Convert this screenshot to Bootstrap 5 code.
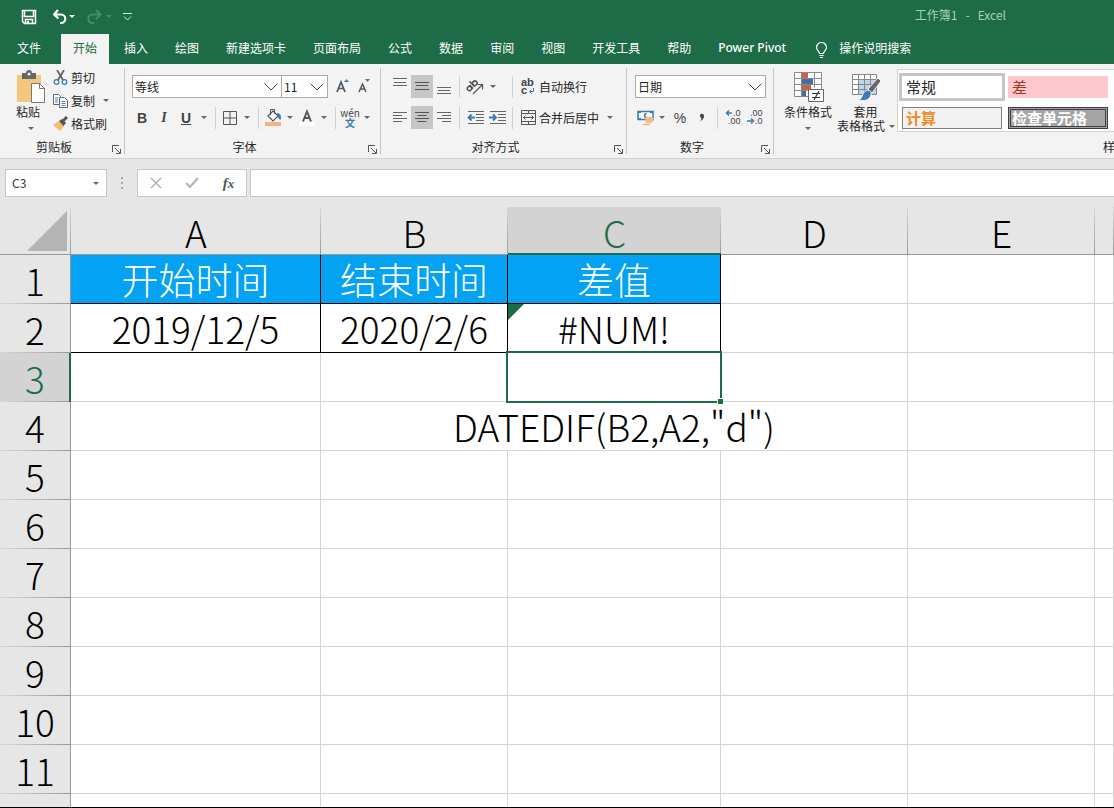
<!DOCTYPE html>
<html lang="zh-CN">
<head>
<meta charset="utf-8">
<meta name="viewport" content="width=device-width, initial-scale=1">
<title>工作簿1 - Excel</title>
<link href="https://cdn.jsdelivr.net/npm/bootstrap@5.3.0/dist/css/bootstrap.min.css" rel="stylesheet">
<style>
:root { --xl-green: #1e6b47; --xl-ribbon: #f3f3f3; --xl-chrome: #e6e6e6; --xl-line: #d4d4d4; }
body { font-family: "Noto Sans CJK SC", "Noto Sans", sans-serif; font-size: 12px; line-height: 18px; color: #262626; background: #fff; }
button { font: inherit; color: inherit; background: none; border: 0; padding: 0; }
svg { display: block; flex: none; }

/* title bar and tabs */
.titlebar { height: 34px; background: var(--xl-green); color: #fff; padding-left: 21px; }
.qgap { margin-left: 11px; }
.doc-title { color: #a5cfb9; padding-right: 108px; padding-bottom: 4px; white-space: pre; }
.ribbon-tabs { height: 30px; background: var(--xl-green); gap: 3px; padding-left: 5px; }
.ribbon-tabs .nav-link { color: #fff; padding: 4px 12px 0; height: 30px; line-height: 20px; white-space: nowrap; border-radius: 0; }
.ribbon-tabs .nav-link.active { background: var(--xl-ribbon); color: var(--xl-green); }
.ribbon-tabs .tab-file { margin-right: 5px; }
.ribbon-tabs .tab-addin { font-family: "Noto Sans", sans-serif; font-weight: 500; }

/* ribbon */
.ribbon { background: var(--xl-ribbon); height: 95px; border-bottom: 1px solid #cfcfcf; }
.rgroup { position: relative; display: flex; flex-direction: column; flex: none; padding-top: 11px; }
.rgroup::after { content: ""; position: absolute; right: 0; top: 4px; bottom: 4px; border-right: 1px solid #c6c6c6; }
.g-clip { width: 125px; padding-top: 2px; }
.g-font { width: 256px; }
.g-align { width: 246px; }
.g-num { width: 147px; }
.g-style { width: 682px; padding-top: 5px; }
.trow { display: flex; align-items: center; height: 23px; margin-bottom: 8px; }
.g-font .trow { padding-left: 6px; }
.g-font .trow:first-child { padding-left: 7px; }
.g-align .trow, .g-num .trow { padding-left: 8px; }
.tool { width: 22px; height: 23px; display: flex; align-items: center; justify-content: center; flex: none; }
.tool-sm { width: 20px; }
.tool.on { background: #c6c6c6; }
.vsep { width: 1px; height: 22px; background: #d2d2d2; margin: 0 4px; flex: none; }
.vsep-far { margin-left: 12px; }
.drop { width: 14px; height: 23px; display: flex; align-items: center; justify-content: center; flex: none; }
.drop::before, .caret::before { content: ""; border: 3px solid transparent; border-top-color: #666; border-bottom: 0; }
.caret { display: flex; justify-content: center; }
.glyph { font-family: "Liberation Sans", sans-serif; font-weight: 700; font-size: 14px; color: #444; }
.glyph-i { font-family: "Liberation Serif", serif; font-style: italic; }
.pinyin { font-size: 10px; line-height: 10px; color: #444; flex-direction: column; }
.pinyin b { color: #3c7ab5; }
.cmd { display: flex; align-items: center; height: 23px; white-space: nowrap; }
.cmd svg { margin-right: 3px; }
.glabel { display: flex; margin-top: auto; height: 20px; padding-bottom: 2px; text-align: center; }
.glabel button { width: 17px; display: flex; align-items: center; justify-content: center; padding-top: 5px; }
.big { text-align: center; line-height: 14px; white-space: nowrap; flex: none; }
.cf { width: 52px; margin-left: 8px; }
.tf { width: 57px; margin-left: 3px; }
.xl-select { height: 23px; padding: 0 18px 0 2px; font-size: 12px; line-height: 20px; color: #262626; border: 1px solid #ababab; border-radius: 0; background-color: #fff; flex: none;
  background-image: url("data:image/svg+xml,%3csvg xmlns='http://www.w3.org/2000/svg' viewBox='0 0 14 8'%3e%3cpath fill='none' stroke='%23444' d='M.5.5 7 7 13.5.5'/%3e%3c/svg%3e"); background-size: 14px 8px; background-position: right 3px center; }
.w-family { width: 150px; }
.w-size { width: 47px; margin-left: -1px; padding-right: 16px; }
.w-num { width: 131px; }

/* cell style gallery */
.gallery { display: grid; grid-template-columns: repeat(6, 100px); gap: 6px; background: #fff; border: 1px solid #d2d2d2; height: 63px; padding: 6px 0 0 4px; margin-left: 3px; overflow: hidden; flex: none; }
.swatch { height: 22px; font-size: 15px; line-height: 20px; text-align: left; padding-left: 4px; }
.sw-normal { outline: 3px solid #c6c6c6; }
.sw-bad { background: #ffc7ce; color: #9c3a20; }
.sw-calc { background: #f2f2f2; border: 1px solid #7f7f7f; color: #ee8c24; font-weight: 700; padding-left: 3px; }
.sw-check { background: #a5a5a5; color: #fff; border: 3px double #3f3f3f; font-weight: 700; line-height: 16px; padding-left: 1px; }

/* formula bar */
.fbar { background: var(--xl-chrome); padding: 10px 0; height: 48px; }
.fbox { height: 28px; background: #fff; border: 1px solid #c6c6c6; flex: none; }
.fbox input { border: 0; outline: 0; background: none; width: 100%; padding: 0 0 0 6px; color: #333; }
.namebox { width: 102px; margin-left: 5px; }
.namebox button { width: 20px; flex: none; }
.fbuttons { width: 110px; }
.fmain { margin-left: 3px; }
.fdots { width: 30px; }
.fx { font-family: "Liberation Serif", serif; font-style: italic; font-weight: 700; font-size: 15px; color: #555; }

/* sheet */
.sheet { flex: 1 1 0; min-height: 0; overflow: hidden; border-bottom: 1px solid #000; }
.cells { width: 100%; table-layout: fixed; border-collapse: separate; border-spacing: 0; font-size: 37px; line-height: 48px; font-weight: 300; color: #000; text-align: center; }
.cells th, .cells td { padding: 0; height: 49px; border: 0 solid var(--xl-line); border-width: 0 1px 1px 0; font-weight: 300; white-space: nowrap; position: relative; }
.cells thead th { height: 48px; line-height: 44px; padding-top: 3px; background: linear-gradient(#d8d8d8, #999) right / 1px 100% no-repeat var(--xl-chrome); border-right: 0; border-bottom-color: #999; }
.cells tbody th { background: linear-gradient(90deg, #d8d8d8, #999) bottom / 100% 1px no-repeat var(--xl-chrome); border-bottom: 0; border-right-color: #999; }
.cells thead th.sel { background-color: #d2d3d2; color: var(--xl-green); border-bottom-color: var(--xl-green); box-shadow: inset 0 -1px var(--xl-green); }
.cells tbody th.sel { background-color: #d2d3d2; color: var(--xl-green); border-right-color: var(--xl-green); box-shadow: inset -1px 0 var(--xl-green); }
.cells td.boxed { border-color: #000; }
.cells td.head { background: #04a2f3; color: #fff; }
.corner svg { position: absolute; right: 4px; bottom: 3px; }
.err::before { content: ""; position: absolute; left: 0; top: 0; border: 8px solid; border-color: var(--xl-green) transparent transparent var(--xl-green); }
.cursor { position: absolute; inset: -2px; border: 2px solid var(--xl-green); z-index: 2; }
.cursor::after { content: ""; position: absolute; right: -3px; bottom: -3px; width: 6px; height: 6px; background: var(--xl-green); border: solid #fff; border-width: 1px 0 0 1px; }
.c-row { width: 71px; } .c-a { width: 250px; } .c-b { width: 187px; } .c-c { width: 213px; }
</style>
</head>
<body>
<div class="d-flex flex-column vh-100 overflow-hidden">

<header class="titlebar d-flex align-items-center flex-shrink-0">
  <button aria-label="保存"><svg width="16" height="16" viewBox="0 0 16 16"><path d="M1.500 1.500h13v13H3.500L1.500 12.500zM3.500 2v5.500h9V2M4.500 14.500v-4h7v4" fill="none" stroke="#fff" stroke-width="1.500"/><path d="M6 12h2v2.500H6z" fill="#fff"/></svg></button>
  <button class="ms-3 ps-0" aria-label="撤消"><svg width="16" height="16" viewBox="0 0 16 16"><path d="M5 1 1 5.500l4.500 4M1.500 5.500H8a4 4 0 0 1 0 8.500H7" fill="none" stroke="#fff" stroke-width="2.200"/></svg></button>
  <svg width="6" height="4"><path d="M0 0h6L3 3z" fill="#fff"/></svg>
  <button class="qgap" aria-label="恢复"><svg width="16" height="16" viewBox="0 0 16 16"><path d="m10 1 4.500 4.500L10 10M14 5.500H6.500a4 4 0 0 0 0 8.500H8" fill="none" stroke="#4a8a69" stroke-width="2"/></svg></button>
  <svg class="ms-1" width="6" height="4"><path d="M0 0h6L3 3z" fill="#4a8a69"/></svg>
  <button class="qgap" aria-label="自定义快速访问工具栏"><svg width="9" height="8"><path d="M0 .5h9M1 3.500l3.500 3.500L8 3.500" fill="none" stroke="#d5eadf"/></svg></button>
  <div class="doc-title ms-auto">工作簿1   -   Excel</div>
</header>

<nav class="ribbon-tabs nav flex-nowrap flex-shrink-0 overflow-hidden">
  <a class="nav-link tab-file" href="#">文件</a>
  <a class="nav-link active" href="#" aria-current="page">开始</a>
  <a class="nav-link" href="#">插入</a>
  <a class="nav-link" href="#">绘图</a>
  <a class="nav-link" href="#">新建选项卡</a>
  <a class="nav-link" href="#">页面布局</a>
  <a class="nav-link" href="#">公式</a>
  <a class="nav-link" href="#">数据</a>
  <a class="nav-link" href="#">审阅</a>
  <a class="nav-link" href="#">视图</a>
  <a class="nav-link" href="#">开发工具</a>
  <a class="nav-link" href="#">帮助</a>
  <a class="nav-link tab-addin" href="#">Power Pivot</a>
  <a class="nav-link d-flex" href="#"><svg class="me-2 mt-1" width="18" height="18" viewBox="0 0 18 18"><path d="M6.500 11.500c0-2.500-3-3-3-6a5 5 0 0 1 10 0c0 3-3 3.500-3 6zM6.500 13.500h4M7 15.500h3" fill="none" stroke="#fff" stroke-width="1.200"/></svg>操作说明搜索</a>
</nav>

<div class="ribbon d-flex flex-shrink-0 overflow-hidden">

  <section class="rgroup g-clip">
    <div class="d-flex align-items-start">
      <button class="big ms-3 pt-1"><svg width="29" height="35" viewBox="0 0 29 35"><path d="M1 5h24v27H1z" fill="#f5c77e"/><path d="M6 3h4a3 3 0 0 1 6 0h4v6H6z" fill="#666"/><circle cx="13" cy="4" r="1.500" fill="#f3f3f3"/><path d="M15.500 13.500h8l5 5v14h-13z" fill="#fff" stroke="#777"/><path d="M23.500 13.500v5h5" fill="none" stroke="#777"/></svg><span class="d-block text-start">粘贴</span><span class="caret pt-2"></span></button>
      <div class="ms-2">
        <button class="cmd"><svg width="15" height="15" viewBox="0 0 15 15"><path d="M4 0l6 10M11 0 5 10" stroke="#666" stroke-width="1.800"/><circle cx="3.500" cy="12" r="2.300" fill="none" stroke="#3c7ab5" stroke-width="1.300"/><circle cx="11.500" cy="12" r="2.300" fill="none" stroke="#3c7ab5" stroke-width="1.300"/></svg>剪切</button>
        <div class="d-flex"><button class="cmd"><svg width="15" height="15" viewBox="0 0 15 15"><path d="M.5 1.500h5l2 2v8h-7z" fill="#fff" stroke="#666"/><path d="M6.500 4.500h5l3 3v7h-8z" fill="#fff" stroke="#666"/><path d="M2 5h3M2 7h3M2 9h3M8.500 8.500h4M8.500 10.500h4M8.500 12.500h4" stroke="#4a82bd"/></svg>复制</button><button class="drop ms-1" aria-label="复制选项"></button></div>
        <button class="cmd"><svg width="15" height="15" viewBox="0 0 15 15"><path d="M0 9 6 5l5 5-4 5z" fill="#f2bd6c"/><path d="m6 5 3-2 4 4-2.500 3z" fill="#555"/><path d="m10 5 4-4" stroke="#555" stroke-width="3"/></svg>格式刷</button>
      </div>
    </div>
    <div class="glabel"><span class="flex-fill">剪贴板</span><button aria-label="剪贴板设置"><svg width="9" height="9"><path d="M.5 7V.5H7M3 3l5 5M8.500 4v4.500H4" fill="none" stroke="#555"/></svg></button></div>
  </section>

  <section class="rgroup g-font">
    <div class="trow">
      <select class="form-select xl-select w-family" aria-label="字体"><option>等线</option></select>
      <select class="form-select xl-select w-size" aria-label="字号"><option>11</option></select>
      <button class="tool ms-1" aria-label="增大字号"><svg width="14" height="16" viewBox="0 0 14 16"><path d="M1 13 5 3l4 10M2.500 9.500h5" fill="none" stroke="#555" stroke-width="1.700"/><path d="M8 3h5l-2.500-3z" fill="#3c7ab5"/></svg></button>
      <button class="tool" aria-label="减小字号"><svg width="14" height="16" viewBox="0 0 14 16"><path d="M1 13 4.500 5 8 13M2 10h5" fill="none" stroke="#555" stroke-width="1.500"/><path d="M7 0h5l-2.500 3z" fill="#3c7ab5"/></svg></button>
    </div>
    <div class="trow">
      <button class="tool glyph">B</button>
      <button class="tool glyph glyph-i">I</button>
      <button class="tool glyph text-decoration-underline">U</button>
      <button class="drop" aria-label="下划线选项"></button><span class="vsep"></span>
      <button class="tool tool-sm" aria-label="边框"><svg width="14" height="14"><path d="M.5.5h13v13H.5zM7 .5v13M.5 7h13" fill="none" stroke="#555"/></svg></button>
      <button class="drop" aria-label="边框选项"></button><span class="vsep"></span>
      <button class="tool tool-sm" aria-label="填充颜色"><svg width="17" height="17" viewBox="0 0 17 17"><path d="M3 7 8 2l5 5-5 5z" fill="#fff" stroke="#555" stroke-width="1.200"/><path d="M5.500 6V.5h4V5" fill="none" stroke="#555"/><path d="M12 4c4 0 4.500 4 3.500 7-2-1-3.500-4-3.500-7" fill="#3c7ab5"/><path d="M0 13h16v4H0z" fill="#f4b183"/></svg></button>
      <button class="drop" aria-label="填充颜色选项"></button>
      <button class="tool tool-sm" aria-label="字体颜色"><svg width="16" height="17" viewBox="0 0 16 17"><path d="M4 12.500 8 2.500l4 10M5.500 9h5" fill="none" stroke="#555" stroke-width="1.900"/><path d="M0 13h16v4H0z" fill="#fff"/></svg></button>
      <button class="drop" aria-label="字体颜色选项"></button><span class="vsep"></span>
      <button class="tool tool-sm pinyin"><span>wén</span><b>文</b></button>
      <button class="drop" aria-label="拼音选项"></button>
    </div>
    <div class="glabel"><span class="flex-fill">字体</span><button aria-label="字体设置"><svg width="9" height="9"><path d="M.5 7V.5H7M3 3l5 5M8.500 4v4.500H4" fill="none" stroke="#555"/></svg></button></div>
  </section>

  <section class="rgroup g-align">
    <div class="trow">
      <button class="tool" aria-label="顶端对齐"><svg width="14" height="17"><path d="M0 .5h14M1 4.500h12M0 7.500h14" stroke="#666"/></svg></button>
      <button class="tool on" aria-label="垂直居中"><svg width="14" height="17"><path d="M0 4.500h14M1 7.500h12M0 11.500h14" stroke="#555"/></svg></button>
      <button class="tool" aria-label="底端对齐"><svg width="14" height="17"><path d="M0 9.500h14M1 12.500h12M0 15.500h14" stroke="#666"/></svg></button>
      <span class="vsep"></span>
      <button class="tool" aria-label="方向"><svg width="18" height="18" viewBox="0 0 18 18"><g fill="none" stroke="#555" stroke-width="1.500" transform="rotate(-45 6 8)"><circle cx="2.500" cy="8" r="2.200"/><path d="M5 5.500v5M7.500 3v7.500"/><circle cx="10" cy="8" r="2.200"/></g><path d="M7 16 16 7M11.500 6.500h5v5" fill="none" stroke="#555" stroke-width="1.200"/></svg></button>
      <button class="drop" aria-label="方向选项"></button><span class="vsep vsep-far"></span>
      <button class="cmd"><svg class="ms-1" width="15" height="19" viewBox="0 0 15 19"><text x="0" y="9" font-family="Liberation Sans" font-size="11" font-weight="700" fill="#444">ab</text><text x="0" y="17" font-family="Liberation Sans" font-size="11" font-weight="700" fill="#444">c</text><path d="M12.500 11v3.500H8.500M10.500 12.500l-2 2 2 2" fill="none" stroke="#3c7ab5"/></svg>自动换行</button>
    </div>
    <div class="trow">
      <button class="tool" aria-label="左对齐"><svg width="14" height="13"><path d="M0 1.500h14M0 4.500h9M0 7.500h14M0 10.500h9" stroke="#666"/></svg></button>
      <button class="tool on" aria-label="居中"><svg width="14" height="13"><path d="M0 1.500h14M2.500 4.500h9M0 7.500h14M2.500 10.500h9" stroke="#555"/></svg></button>
      <button class="tool" aria-label="右对齐"><svg width="14" height="13"><path d="M0 1.500h14M5 4.500h9M0 7.500h14M5 10.500h9" stroke="#666"/></svg></button>
      <span class="vsep"></span>
      <button class="tool" aria-label="减少缩进量"><svg width="17" height="14"><path d="M1 .5h16M9 3.500h8M9 6.500h8M9 9.500h8M1 12.500h16" stroke="#666"/><path d="M8 6.500H2M4.500 3.500l-3 3 3 3" fill="none" stroke="#3c7ab5" stroke-width="1.800"/></svg></button>
      <button class="tool" aria-label="增加缩进量"><svg width="17" height="14"><path d="M1 .5h16M9 3.500h8M9 6.500h8M9 9.500h8M1 12.500h16" stroke="#666"/><path d="M0 6.500h6M4 3.500l3 3-3 3" fill="none" stroke="#3c7ab5" stroke-width="1.800"/></svg></button>
      <span class="vsep"></span>
      <button class="cmd"><svg class="ms-1" width="15" height="15"><path d="M.5.5h14v14H.5zM.5 3.500h14M.5 11.500h14M7.500 .5v3M7.500 11.500v3M2 7.500h11M4.500 5.500l-2 2 2 2M10.500 5.500l2 2-2 2" fill="none" stroke="#555"/></svg>合并后居中</button>
      <button class="drop ms-1" aria-label="合并选项"></button>
    </div>
    <div class="glabel"><span class="flex-fill">对齐方式</span><button aria-label="对齐设置"><svg width="9" height="9"><path d="M.5 7V.5H7M3 3l5 5M8.500 4v4.500H4" fill="none" stroke="#555"/></svg></button></div>
  </section>

  <section class="rgroup g-num">
    <div class="trow"><select class="form-select xl-select w-num" aria-label="数字格式"><option>日期</option></select></div>
    <div class="trow">
      <button class="tool tool-sm" aria-label="会计数字格式"><svg width="17" height="16" viewBox="0 0 17 16"><path d="M1 1.500h15v8H1z" fill="#fff" stroke="#3c7ab5" stroke-width="1.500"/><path d="M1 1h3v2H1zM13 1h3v2h-3zM1 8h3v2H1z" fill="#3c7ab5"/><path d="M9.500 3.500a2 2 0 1 0 0 4" fill="none" stroke="#3c7ab5" stroke-width="1.500"/><ellipse cx="12.500" cy="8.500" rx="4" ry="2" fill="#f4bd84"/><path d="M8.500 10h8M8.500 12h7M6 14.500h7" stroke="#eeb27a" stroke-width="1.700"/></svg></button>
      <button class="drop" aria-label="会计格式选项"></button>
      <button class="tool glyph fw-normal">%</button>
      <button class="tool" aria-label="千位分隔样式"><svg width="6" height="9"><path d="M1 2.500C1 0 5 0 5 3c0 2.500-1.500 4-4 5.500 1-1.500 1.500-2.500 1.500-3.500C1.500 5 1 3.500 1 2.500z" fill="#444"/></svg></button>
      <span class="vsep"></span>
      <button class="tool" aria-label="增加小数位数"><svg width="17" height="19" viewBox="0 0 17 19"><text x="8" y="8" font-family="Liberation Sans" font-size="9" fill="#444">.0</text><text x="3" y="16" font-family="Liberation Sans" font-size="9" fill="#444">.00</text><path d="M7 5H2M4 2.500 1.500 5 4 7.500" fill="none" stroke="#3c7ab5" stroke-width="1.500"/></svg></button>
      <button class="tool" aria-label="减少小数位数"><svg width="17" height="19" viewBox="0 0 17 19"><text x="3" y="8" font-family="Liberation Sans" font-size="9" fill="#444">.00</text><text x="8" y="16" font-family="Liberation Sans" font-size="9" fill="#444">.0</text><path d="M0 13h5M4 10.500 6.500 13 4 15.500" fill="none" stroke="#3c7ab5" stroke-width="1.500"/></svg></button>
    </div>
    <div class="glabel"><span class="flex-fill">数字</span><button aria-label="数字设置"><svg width="9" height="9"><path d="M.5 7V.5H7M3 3l5 5M8.500 4v4.500H4" fill="none" stroke="#555"/></svg></button></div>
  </section>

  <section class="rgroup g-style">
    <div class="d-flex align-items-start">
      <button class="big cf"><svg class="mx-auto" width="32" height="36" viewBox="0 0 32 36"><path d="M2.500 3.500h27v24h-27z" fill="#fff"/><path d="M9 4h7v5H9z" fill="#d0603a"/><path d="M9 10h12v5H9z" fill="#3c6fae"/><path d="M9 16h10v5H9z" fill="#d0603a"/><path d="M9 22h5v5H9z" fill="#3c6fae"/><path d="M2.500 3.500h27v24h-27zM9.500 3.500v24M22.500 3.500v15M2.500 9.500h27M2.500 15.500h27M2.500 21.500h13" fill="none" stroke="#8a8a8a"/><path d="M16.500 20.500h15v12h-15z" fill="#fff" stroke="#666"/><path d="M20 24.500h8M20 28.500h8M27 22l-5 9" stroke="#333" stroke-width="1.200"/></svg><span class="d-block">条件格式</span><span class="caret pt-2"></span></button>
      <button class="big tf"><svg class="mx-auto" width="30" height="36" viewBox="0 0 30 36"><path d="M1.500 5.500h24v20h-24z" fill="#fff"/><path d="M8 10h17v15H8z" fill="#bcd6ec"/><path d="M1.500 5.500h24v20h-24zM7.500 5.500v20M13.500 5.500v20M19.500 5.500v20M1.500 10.500h24M1.500 15.500h24M1.500 20.500h24" fill="none" stroke="#888"/><path d="m27 9 3 3-9 12-4-4z" fill="#666" stroke="#f3f3f3"/><path d="M16 21c3 0 5 2 4 5-2 6-7 6-12 5 4-2 3-8 8-10z" fill="#3c7ab5" stroke="#f3f3f3"/></svg><span class="d-block">套用</span><span class="d-flex align-items-center">表格格式<span class="caret ms-1"></span></span></button>
      <div class="gallery">
        <button class="swatch sw-normal">常规</button><button class="swatch sw-bad">差</button><span></span><span></span><span></span><span></span>
        <button class="swatch sw-calc">计算</button><button class="swatch sw-check">检查单元格</button>
      </div>
    </div>
    <div class="glabel"><span class="flex-fill">样式</span></div>
  </section>
</div>

<div class="fbar d-flex flex-shrink-0">
  <div class="fbox namebox d-flex align-items-center"><input type="text" value="C3" aria-label="名称框"><button class="caret" aria-label="名称列表"></button></div>
  <div class="fdots d-flex align-items-center justify-content-center"><svg width="2" height="12"><path d="M0 0h2v2H0zM0 5h2v2H0zM0 10h2v2H0z" fill="#a6a6a6"/></svg></div>
  <div class="fbox fbuttons d-flex align-items-center justify-content-around">
    <button aria-label="取消"><svg width="12" height="12"><path d="m1 1 10 10M11 1 1 11" stroke="#b5b5b5" stroke-width="1.500"/></svg></button>
    <button aria-label="输入"><svg width="14" height="12"><path d="m1 6 4 4 8-9" fill="none" stroke="#b5b5b5" stroke-width="2.200"/></svg></button>
    <button class="fx" aria-label="插入函数">f<small>x</small></button>
  </div>
  <div class="fbox flex-fill border-end-0 fmain"><input type="text" aria-label="编辑栏"></div>
</div>

<main class="sheet">
<table class="cells">
  <colgroup><col class="c-row"><col class="c-a"><col class="c-b"><col class="c-c"><col class="c-b"><col class="c-b"><col></colgroup>
  <thead><tr><th class="corner"><svg width="40" height="40"><path d="M40 0v40H0z" fill="#b4b4b4"/></svg></th><th>A</th><th>B</th><th class="sel">C</th><th>D</th><th>E</th><th></th></tr></thead>
  <tbody>
    <tr><th>1</th><td class="boxed head">开始时间</td><td class="boxed head">结束时间</td><td class="boxed head">差值</td><td></td><td></td><td></td></tr>
    <tr><th>2</th><td class="boxed">2019/12/5</td><td class="boxed">2020/2/6</td><td class="boxed err">#NUM!</td><td></td><td></td><td></td></tr>
    <tr><th class="sel">3</th><td></td><td></td><td><div class="cursor"></div></td><td></td><td></td><td></td></tr>
    <tr><th>4</th><td></td><td colspan="3">DATEDIF(B2,A2,"d")</td><td></td><td></td></tr>
    <tr><th>5</th><td></td><td></td><td></td><td></td><td></td><td></td></tr>
    <tr><th>6</th><td></td><td></td><td></td><td></td><td></td><td></td></tr>
    <tr><th>7</th><td></td><td></td><td></td><td></td><td></td><td></td></tr>
    <tr><th>8</th><td></td><td></td><td></td><td></td><td></td><td></td></tr>
    <tr><th>9</th><td></td><td></td><td></td><td></td><td></td><td></td></tr>
    <tr><th>10</th><td></td><td></td><td></td><td></td><td></td><td></td></tr>
    <tr><th>11</th><td></td><td></td><td></td><td></td><td></td><td></td></tr>
    <tr><th></th><td></td><td></td><td></td><td></td><td></td><td></td></tr>
  </tbody>
</table>
</main>
</div>
<script src="https://cdn.jsdelivr.net/npm/bootstrap@5.3.0/dist/js/bootstrap.bundle.min.js"></script>
</body>
</html>
